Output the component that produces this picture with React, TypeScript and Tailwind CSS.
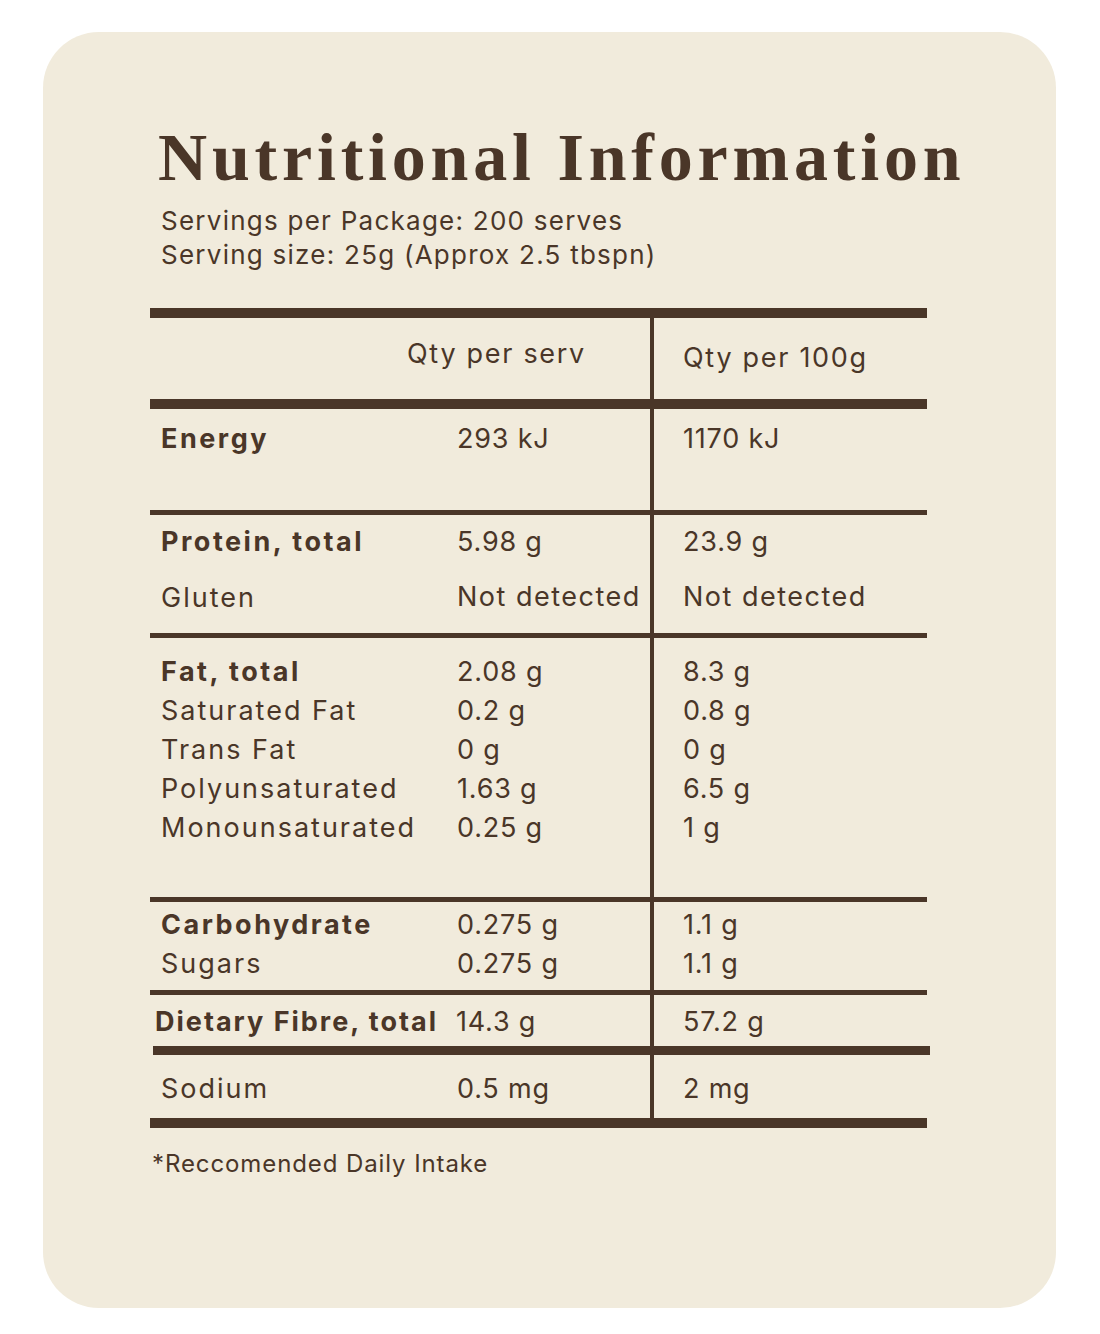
import React from 'react';

type Row = { label: string; serv: string; per100: string; bold?: boolean };

const sans = { fontFamily: 'Inter, "Noto Sans", sans-serif' };
const ink = 'border-[#4a3628]';

const Label: React.FC<{ bold?: boolean; children: React.ReactNode; className?: string }> = ({ bold, children, className = '' }) => (
  <div className={`leading-[39px] whitespace-nowrap ${bold ? 'font-bold tracking-[2.5px]' : 'font-normal tracking-[2px]'} ${className}`}>
    {children}
  </div>
);

const Value: React.FC<{ children: string; className?: string }> = ({ children, className = '' }) => (
  <div className={`leading-[39px] whitespace-nowrap ${children === 'Not detected' ? 'tracking-[1.5px]' : 'tracking-[0.8px]'} ${className}`}>
    {children}
  </div>
);

const Section: React.FC<{ rows: Row[]; h: string; pt: string }> = ({ rows, h, pt }) => (
  <div className={`flex ${h}`}>
    <div className={`w-[307px] pl-[11px] ${pt}`}>
      {rows.map((r) => (
        <Label key={r.label} bold={r.bold}>
          {r.label}
        </Label>
      ))}
    </div>
    <div className={`w-[193px] ${pt}`}>
      {rows.map((r) => (
        <Value key={r.label}>{r.serv}</Value>
      ))}
    </div>
    <div className={`flex-1 border-l-4 ${ink} pl-[29px] ${pt}`}>
      {rows.map((r) => (
        <Value key={r.label}>{r.per100}</Value>
      ))}
    </div>
  </div>
);

const Thick = () => <div className="h-[10px] bg-[#4a3628]" />;
const Thin = () => <div className="h-[5px] bg-[#4a3628]" />;

export default function App() {
  return (
    <div className="min-h-[1334px] bg-white pl-[43px] pt-[32px]" style={sans}>
      <div className="w-[1013px] h-[1276px] rounded-[56px] bg-[#f1ebdc] pl-[107px] pt-[91px] text-[#4a3628]">
        <h1
          className="ml-[8px] text-[68px] leading-[68px] font-bold tracking-[4.8px] whitespace-nowrap"
          style={{ fontFamily: '"Liberation Serif", "DejaVu Serif", serif' }}
        >
          Nutritional Information
        </h1>
        <div className="ml-[11px] mt-[13px] text-[26px] leading-[34px] tracking-[1.25px]">
          <div>Servings per Package: 200 serves</div>
          <div>Serving size: 25g (Approx 2.5 tbspn)</div>
        </div>

        <div className="mt-[36px] w-[777px] text-[27px]">
          <Thick />
          <div className="flex h-[81px]">
            <div className="w-[500px] pl-[257px] pt-[16px] leading-[39px] tracking-[1.7px]">Qty per serv</div>
            <div className={`flex-1 border-l-4 ${ink} pl-[29px] pt-[20px] leading-[39px] tracking-[1.7px]`}>Qty per 100g</div>
          </div>
          <Thick />
          <Section h="h-[101px]" pt="pt-[10px]" rows={[{ label: 'Energy', serv: '293 kJ', per100: '1170 kJ', bold: true }]} />
          <Thin />
          <div className="flex h-[118px]">
            <div className="w-[307px] pl-[11px] pt-[7px]">
              <Label bold>Protein, total</Label>
              <Label className="mt-[17px]">Gluten</Label>
            </div>
            <div className="w-[193px] pt-[7px]">
              <Value>5.98 g</Value>
              <Value className="mt-[16px]">Not detected</Value>
            </div>
            <div className={`flex-1 border-l-4 ${ink} pl-[29px] pt-[7px]`}>
              <Value>23.9 g</Value>
              <Value className="mt-[16px]">Not detected</Value>
            </div>
          </div>
          <Thin />
          <Section
            h="h-[259px]"
            pt="pt-[14px]"
            rows={[
              { label: 'Fat, total', serv: '2.08 g', per100: '8.3 g', bold: true },
              { label: 'Saturated Fat', serv: '0.2 g', per100: '0.8 g' },
              { label: 'Trans Fat', serv: '0 g', per100: '0 g' },
              { label: 'Polyunsaturated', serv: '1.63 g', per100: '6.5 g' },
              { label: 'Monounsaturated', serv: '0.25 g', per100: '1 g' },
            ]}
          />
          <Thin />
          <Section
            h="h-[88px]"
            pt="pt-[3px]"
            rows={[
              { label: 'Carbohydrate', serv: '0.275 g', per100: '1.1 g', bold: true },
              { label: 'Sugars', serv: '0.275 g', per100: '1.1 g' },
            ]}
          />
          <Thin />
          <div className="flex h-[51px]">
            <div className="w-[306px] pl-[5px] pt-[7px]">
              <div className="leading-[39px] whitespace-nowrap font-bold tracking-[2px]">Dietary Fibre, total</div>
            </div>
            <div className="w-[194px] pt-[7px]">
              <Value>14.3 g</Value>
            </div>
            <div className={`flex-1 border-l-4 ${ink} pl-[29px] pt-[7px]`}>
              <Value>57.2 g</Value>
            </div>
          </div>
          <div className="ml-[3px] -mr-[3px] h-[9px] bg-[#4a3628]" />
          <Section h="h-[63px]" pt="pt-[14px]" rows={[{ label: 'Sodium', serv: '0.5 mg', per100: '2 mg' }]} />
          <Thick />
        </div>

        <div className="ml-[2px] mt-[21px] text-[24px] leading-[30px] tracking-[0.9px]">*Reccomended Daily Intake</div>
      </div>
    </div>
  );
}
